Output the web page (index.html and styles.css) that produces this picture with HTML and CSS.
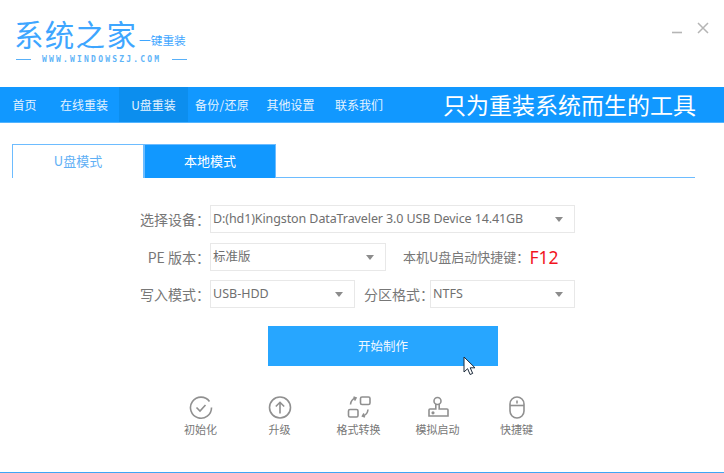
FILE: index.html
```html
<!DOCTYPE html>
<html lang="zh-CN">
<head>
<meta charset="utf-8">
<title>系统之家一键重装</title>
<link rel="stylesheet" href="styles.css">
</head>
<body>
<div class="app">
  <header class="top">
    <div class="logo">
      <div class="logo-main"><span class="logo-name">系统之家</span><span class="logo-sub">一键重装</span></div>
      <div class="logo-url"><i class="dash"></i><span>WWW.WINDOWSZJ.COM</span><i class="dash"></i></div>
    </div>
    <div class="win">
      <svg class="win-min" width="12" height="12" viewBox="0 0 12 12"><path d="M1 9.500h10" stroke="#b5b5b5" stroke-width="1.600"/></svg>
      <svg class="win-close" width="12" height="12" viewBox="0 0 12 12"><path d="M1 1l10 10M11 1L1 11" stroke="#b5b5b5" stroke-width="1.500"/></svg>
    </div>
  </header>
  <nav class="nav">
    <a class="nav-item n1">首页</a>
    <a class="nav-item n2">在线重装</a>
    <a class="nav-item n3 on">U盘重装</a>
    <a class="nav-item n4">备份/还原</a>
    <a class="nav-item n5">其他设置</a>
    <a class="nav-item n6">联系我们</a>
    <div class="slogan">只为重装系统而生的工具</div>
  </nav>
  <main class="main">
    <div class="tabs">
      <div class="tab active">U盘模式</div>
      <div class="tab">本地模式</div>
    </div>
    <div class="form">
      <div class="row">
        <label class="lbl">选择设备：</label>
        <div class="sel w-full"><span class="dev">D:(hd1)Kingston DataTraveler 3.0 USB Device 14.41GB</span><i class="arrow"></i></div>
      </div>
      <div class="row">
        <label class="lbl">PE 版本：</label>
        <div class="sel w-pe"><span>标准版</span><i class="arrow"></i></div>
        <div class="hint">本机U盘启动快捷键：<b class="key">F12</b></div>
      </div>
      <div class="row">
        <label class="lbl">写入模式：</label>
        <div class="sel w-mode"><span>USB-HDD</span><i class="arrow"></i></div>
        <label class="lbl2">分区格式：</label>
        <div class="sel w-fmt"><span>NTFS</span><i class="arrow"></i></div>
      </div>
    </div>
    <div class="action">
      <div class="start">开始制作
        <svg class="cursor" width="14" height="20" viewBox="0 0 14 20"><path d="M1 1v15l3.600-3.300 2.500 5.800 2.600-1.100-2.500-5.600H12L1 1z" fill="#fff" stroke="#1c2a3a" stroke-width="1"/></svg>
      </div>
    </div>
    <div class="tools">
      <div class="tool">
        <svg width="24" height="24" viewBox="0 0 24 24" fill="none" stroke="#909090" stroke-width="1.600"><path d="M20.500 5.500A10.500 10.500 0 1 0 22.500 11.500"/><path d="M7.500 11.500l3.500 3.500 5.500-6"/></svg>
        <span>初始化</span>
      </div>
      <div class="tool">
        <svg width="24" height="24" viewBox="0 0 24 24" fill="none" stroke="#909090" stroke-width="1.600"><circle cx="12" cy="11.500" r="10.500"/><path d="M12 17.500V6.500M7.800 10.500L12 6.300l4.200 4.200"/></svg>
        <span>升级</span>
      </div>
      <div class="tool">
        <svg width="24" height="24" viewBox="0 0 24 24" fill="none" stroke="#909090" stroke-width="1.600"><rect x="13.500" y="1" width="9.500" height="7.500" rx="1.500"/><rect x="1.500" y="13.500" width="9.500" height="7.500" rx="1.500"/><path d="M3.500 8.500Q4 3.500 8.500 2"/><path d="M6.500 1l2.500 1-1.500 2.500"/><path d="M21 13.500Q20.500 18.500 16 20"/><path d="M18 21l-2.500-1 1.500-2.500"/></svg>
        <span>格式转换</span>
      </div>
      <div class="tool">
        <svg width="24" height="24" viewBox="0 0 24 24" fill="none" stroke="#909090" stroke-width="1.600"><circle cx="11.500" cy="5" r="3.500"/><path d="M9.800 8v5H4a1 1 0 0 0-1 1v6h19v-6a1 1 0 0 0-1-1h-7.800V8"/><circle cx="7" cy="16.800" r=".8"/></svg>
        <span>模拟启动</span>
      </div>
      <div class="tool">
        <svg width="24" height="24" viewBox="0 0 24 24" fill="none" stroke="#909090" stroke-width="1.600"><rect x="5" y="1" width="14" height="21" rx="7"/><path d="M5 9.500h14"/><path d="M12 4.500v3"/></svg>
        <span>快捷键</span>
      </div>
    </div>
  </main>
  <div class="bottom-line"></div>
</div>
</body>
</html>
```
FILE: styles.css
```css
* { box-sizing: border-box; margin: 0; padding: 0; }
html, body { height: 100%; }
body {
  background: #fff;
  font-family: "Noto Sans CJK SC", "Noto Sans", sans-serif;
  color: #777;
  overflow: hidden;
}
.app { width: 724px; height: 473px; display: flex; flex-direction: column; }

.top { height: 87px; display: flex; justify-content: space-between; padding: 19px 15px 0 14px; }
.logo-main { display: flex; align-items: flex-end; height: 28px; color: #3ea6ff; }
.logo-name { font-size: 29.500px; line-height: 28px; letter-spacing: 1.300px; width: 125px; white-space: nowrap; font-weight: 400; }
.logo-sub { font-size: 11.700px; line-height: 14px; white-space: nowrap; }
.logo-url { display: flex; align-items: center; gap: 11px; margin-top: 8px; height: 9px; padding-left: 2px; color: #5fb4f8; }
.logo-url span { font-family: "DejaVu Sans Mono", monospace; font-size: 8px; font-weight: 700; line-height: 9px; letter-spacing: 2.200px; white-space: nowrap; }
.dash { display: block; width: 15px; height: 1px; background: #58b0f8; }

.win { display: flex; gap: 14px; padding-top: 3px; height: 20px; }
.win-min { margin-top: 1px; }

.nav { height: 36px; background: #1198ff; display: flex; align-items: stretch; position: relative; border-bottom: 1px solid #52b4ff; color: #e4f3ff; }
.nav-item { font-size: 12px; line-height: 35px; display: block; white-space: nowrap; text-align: center; }
.n1 { width: 49px; }
.n2 { width: 70px; }
.n3 { width: 69px; background: #0c8eee; }
.n4 { width: 68px; letter-spacing: .3px; }
.n5 { width: 69px; }
.n6 { width: 68px; }
.slogan { position: absolute; left: 443px; top: 2px; font-size: 23px; line-height: 30px; color: #fff; white-space: nowrap; }

.main { flex: 1; padding: 21px 29px 0 12px; }
.tabs { display: flex; height: 34px; border-bottom: 1px solid #6dbcff; }
.tab { width: 132px; height: 34px; line-height: 31px; text-align: center; font-size: 13px; color: #fff; background: #1198ff; border: 1px solid #6dbcff; border-bottom: 0; }
.tab.active { color: #5fb0f5; background: #fff; }

.form { padding-top: 27px; }
.row { display: flex; align-items: center; height: 28px; margin-bottom: 9.500px; }
.lbl { width: 198px; text-align: right; font-size: 14px; color: #777; white-space: nowrap; }
.lbl2 { width: 66px; margin-left: 9px; text-align: left; font-size: 14px; color: #777; white-space: nowrap; }
.sel { height: 28px; border: 1px solid #e8e8e8; position: relative; display: flex; align-items: center; padding-left: 2px; padding-bottom: 2px; font-size: 12.500px; color: #6f6f6f; white-space: nowrap; font-family: "Noto Sans", "Noto Sans CJK SC", sans-serif; }
.dev { letter-spacing: -.1px; }
.arrow { position: absolute; right: 11px; top: 11px; width: 0; height: 0; border: 4px solid transparent; border-top: 5px solid #8c8c8c; border-bottom: 0; }
.w-full { width: 365px; }
.w-pe { width: 176px; }
.w-mode { width: 145px; }
.w-fmt { width: 145px; }
.hint { margin-left: 17px; font-size: 13px; color: #777; white-space: nowrap; display: flex; align-items: center; }
.key { color: #f2141e; font-weight: 400; font-size: 17.500px; font-family: "Noto Sans", sans-serif; }

.action { display: flex; padding-left: 256px; margin-top: 18px; }
.start { width: 230px; height: 40px; background: #27a6ff; color: #f0f8ff; text-align: center; line-height: 40px; font-size: 12.500px; position: relative; }
.cursor { position: absolute; left: 195px; top: 30px; }

.tools { display: flex; padding-left: 149px; margin-top: 30px; }
.tool { width: 79px; display: flex; flex-direction: column; align-items: center; font-size: 11px; color: #777; line-height: 14px; }
.tool span { margin-top: 2px; white-space: nowrap; }
.tool svg { display: block; }

.bottom-line { height: 1px; background: #3ea6f5; flex: none; }
```
